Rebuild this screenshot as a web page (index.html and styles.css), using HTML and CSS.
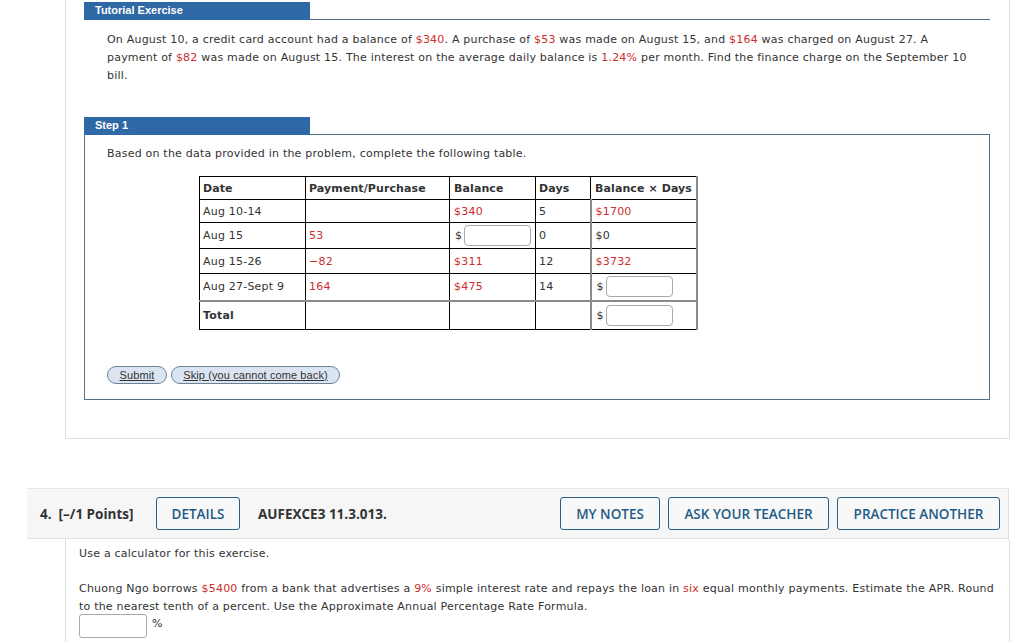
FILE: index.html
```html
<!DOCTYPE html>
<html>
<head>
<meta charset="utf-8">
<link rel="stylesheet" href="styles.css">
</head>
<body>
<div class="panel">
  <div class="section">
    <div class="sec-head"><div class="bar">Tutorial Exercise</div></div>
    <p class="prob">On August 10, a credit card account had a balance of <span class="r">$340</span>. A purchase of <span class="r">$53</span> was made on August 15, and <span class="r">$164</span> was charged on August 27. A payment of <span class="r">$82</span> was made on August 15. The interest on the average daily balance is <span class="r">1.24%</span> per month. Find the finance charge on the September 10 bill.</p>
  </div>
  <div class="section step">
    <div class="sec-head"><div class="bar">Step 1</div></div>
    <div class="box">
      <p class="intro">Based on the data provided in the problem, complete the following table.</p>
      <table class="tbl">
        <tr class="h1"><th class="c1">Date</th><th class="c2">Payment/Purchase</th><th class="c3">Balance</th><th class="c4">Days</th><th class="c5">Balance × Days</th></tr>
        <tr class="h2"><td>Aug 10-14</td><td></td><td class="r">$340</td><td>5</td><td class="r">$1700</td></tr>
        <tr class="h3"><td>Aug 15</td><td class="r">53</td><td><span class="cur">$</span><span class="inp"></span></td><td>0</td><td>$0</td></tr>
        <tr class="h4"><td>Aug 15-26</td><td class="r">−82</td><td class="r">$311</td><td>12</td><td class="r">$3732</td></tr>
        <tr class="h5"><td>Aug 27-Sept 9</td><td class="r">164</td><td class="r">$475</td><td>14</td><td><span class="cur">$</span><span class="inp"></span></td></tr>
        <tr class="h6 total"><td><b>Total</b></td><td></td><td></td><td></td><td><span class="cur">$</span><span class="inp"></span></td></tr>
      </table>
      <div class="btns">
        <span class="pill p1">Submit</span>
        <span class="pill p2">Skip (you cannot come back)</span>
      </div>
    </div>
  </div>
</div>

<div class="qhead">
  <span class="qnum">4.&nbsp; [–/1 Points]</span>
  <span class="qbtn b-details">DETAILS</span>
  <span class="qcode">AUFEXCE3 11.3.013.</span>
  <span class="spacer"></span>
  <span class="qbtn b-notes">MY NOTES</span>
  <span class="qbtn b-ask">ASK YOUR TEACHER</span>
  <span class="qbtn b-prac">PRACTICE ANOTHER</span>
</div>
<div class="qbody">
  <p class="calc">Use a calculator for this exercise.</p>
  <p class="q4">Chuong Ngo borrows <span class="r">$5400</span> from a bank that advertises a <span class="r">9%</span> simple interest rate and repays the loan in <span class="r">six</span> equal monthly payments. Estimate the APR. Round to the nearest tenth of a percent. Use the Approximate Annual Percentage Rate Formula.</p>
  <div class="ans"><span class="inp wide"></span><span class="pct">%</span></div>
</div>
</body>
</html>
```

FILE: styles.css
```css
html, body {
  margin: 0;
  padding: 0;
  background: #ffffff;
}
body {
  font-family: "DejaVu Sans", Verdana, sans-serif;
  font-size: 11px;
  letter-spacing: 0.21px;
  color: #333;
  width: 1024px;
  height: 642px;
  overflow: hidden;
}
p { margin: 0; }
.r { color: #cc2d2d; }

.panel {
  margin-left: 65px;
  width: 945px;
  box-sizing: border-box;
  border-left: 1px solid #dcdcdc;
  border-right: 1px solid #dcdcdc;
  border-bottom: 1px solid #e2e2e2;
  padding: 2px 0 38px 18px;
}
.section {
  width: 906px;
}
.sec-head {
  height: 17px;
  border-bottom: 1px solid #4f6b84;
  display: flex;
}
.bar {
  width: 215px;
  height: 18px;
  background: #2e68a5;
  color: #fff;
  font-family: "Liberation Sans", Arial, sans-serif;
  font-weight: bold;
  font-size: 11px;
  letter-spacing: 0;
  line-height: 17px;
  padding-left: 11px;
}
.prob {
  margin-top: 11px;
  padding-left: 23px;
  padding-right: 20px;
  line-height: 18px;
}
.step {
  margin-top: 32px;
}
.step .sec-head {
  border-bottom: none;
}
.box {
  border: 1px solid #56718a;
  padding: 10px 0 15px 22px;
}
.intro {
  line-height: 18px;
}
.tbl {
  margin-top: 13px;
  margin-left: 92px;
  border-collapse: collapse;
  border: 1px solid #000;
  font-size: 11px;
}
.tbl th, .tbl td {
  border: 1px solid #000;
  padding: 0 0 0 3px;
  text-align: left;
  vertical-align: middle;
  white-space: nowrap;
  box-sizing: border-box;
}
.tbl th { font-weight: bold; letter-spacing: 0.1px; }
.c1 { width: 106px; }
.c2 { width: 144px; }
.c3 { width: 86px; }
.c4 { width: 55px; }
.c5 { width: 106px; }
.tbl th.c5, .tbl td:last-child { border-right: 2px solid #8a8a8a; }
.tbl td:nth-child(5) { border-left: 2px solid #8a8a8a; }
.h1 { height: 23px; }
.h2 { height: 23px; }
.h3 { height: 26px; }
.h4 { height: 25px; }
.h5 { height: 27px; }
.h6 { height: 29px; }
.total td { border-top: 2px solid #8a8a8a; }
.tbl td:nth-child(3), .tbl td:nth-child(5), .tbl th.c3, .tbl th.c5 { padding-left: 4px; }
.cur {
  display: inline-block;
  vertical-align: middle;
  margin-right: 2px;
  margin-left: 1px;
}
.inp {
  display: inline-block;
  vertical-align: middle;
  width: 65px;
  height: 19px;
  border: 1px solid #a9a9a9;
  border-radius: 4px;
  background: #fff;
}
.btns {
  margin-top: 36px;
  display: flex;
  gap: 4px;
}
.pill {
  display: inline-block;
  height: 18px;
  line-height: 17px;
  box-sizing: border-box;
  border: 1px solid #6e8296;
  border-radius: 9px;
  background: #dbe5f1;
  font-family: "Liberation Sans", Arial, sans-serif;
  font-size: 11px;
  letter-spacing: 0.1px;
  color: #333;
  text-decoration: underline;
  text-align: center;
}
.p1 { width: 60px; }
.p2 { width: 169px; }

.qhead {
  margin-top: 49px;
  margin-left: 27px;
  width: 982px;
  height: 51px;
  box-sizing: border-box;
  background: #f6f6f6;
  border-top: 1px solid #e6e6e6;
  border-bottom: 1px solid #e2e2e2;
  border-right: 1px solid #dcdcdc;
  display: flex;
  align-items: center;
  padding: 0 8px 0 13px;
  font-family: "Open Sans", sans-serif;
  font-size: 13px;
  letter-spacing: 0;
  color: #333;
}
.qnum { font-weight: bold; width: 116px; font-size: 13.5px; }
.qcode { font-weight: bold; margin-left: 18px; font-size: 13.5px; }
.spacer { flex: 1; }
.qbtn {
  height: 33px;
  box-sizing: border-box;
  border: 1.5px solid #2c5f83;
  border-radius: 3px;
  background: #f8f8f8;
  color: #1f5b86;
  font-weight: 600;
  font-size: 13.5px;
  display: flex;
  align-items: center;
  justify-content: center;
}
.b-details { width: 84px; }
.b-notes { width: 100px; margin-right: 8px; }
.b-ask { width: 161px; margin-right: 8px; }
.b-prac { width: 163px; }

.qbody {
  margin-left: 65px;
  width: 945px;
  box-sizing: border-box;
  border-left: 1px solid #dcdcdc;
  border-right: 1px solid #dcdcdc;
  padding: 6px 14px 0 13px;
  height: 120px;
}
.calc { line-height: 18px; }
.q4 { margin-top: 17px; line-height: 18px; }
.ans { margin-top: -2px; display: flex; align-items: flex-start; }
.inp.wide { width: 66px; height: 22px; border-radius: 3px; }
.pct { margin-left: 5px; line-height: 20px; }
```
